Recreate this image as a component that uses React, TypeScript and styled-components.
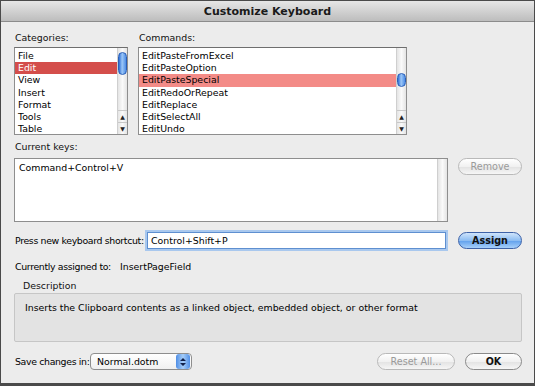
import styled, { createGlobalStyle } from "styled-components"

const Global = createGlobalStyle`
  html, body { margin: 0; padding: 0; background: #3c3c3c; }
  body { font-family: "DejaVu Sans", "Liberation Sans", sans-serif; font-size: 9.4px; color: #000; }
  * { box-sizing: border-box; }
`

const categories = ["File", "Edit", "View", "Insert", "Format", "Tools", "Table"]
const commands = [
  "EditPasteFromExcel",
  "EditPasteOption",
  "EditPasteSpecial",
  "EditRedoOrRepeat",
  "EditReplace",
  "EditSelectAll",
  "EditUndo",
]

const Window = styled.div`
  width: 535px;
  height: 386px;
  background: #ececec;
  border: 1px solid #4a4a4a;
  border-bottom: 3px solid #4a4a4a;
  display: flex;
  flex-direction: column;
  overflow: hidden;
`
const TitleBar = styled.div`
  height: 21px;
  flex: none;
  background: linear-gradient(#e6e6e6, #bdbdbd);
  border-bottom: 1px solid #8c8c8c;
  display: flex;
  align-items: center;
  justify-content: center;
  font-weight: bold;
  font-size: 11px;
  color: #1a1a1a;
`
const Body = styled.div`
  flex: 1;
  padding: 9px 12px 0 13px;
  display: flex;
  flex-direction: column;
  white-space: nowrap;
`
const Label = styled.div<{ $indent?: number; $gap?: number }>`
  height: 13px;
  line-height: 13px;
  padding-left: ${(p) => p.$indent ?? 1}px;
  margin-top: ${(p) => p.$gap ?? 0}px;
  color: #111;
`
const ListRow = styled.div`
  display: flex;
  gap: 10px;
`
const Column = styled.div<{ $w: number }>`
  width: ${(p) => p.$w}px;
  display: flex;
  flex-direction: column;
  gap: 3px;
`
const ListBox = styled.div`
  height: 88px;
  background: #fff;
  border: 1px solid #8e8e8e;
  border-top-color: #6e6e6e;
  display: flex;
`
const Items = styled.div`
  flex: 1;
  padding-top: 2px;
`
const Item = styled.div<{ $sel?: string; $light?: boolean }>`
  height: 12.2px;
  line-height: 12px;
  padding-left: 3px;
  background: ${(p) => p.$sel ?? "transparent"};
  color: ${(p) => (p.$sel && !p.$light ? "#fff" : "#000")};
`
const Track = styled.div`
  width: 10px;
  position: relative;
  background: linear-gradient(90deg, #e4e4e4, #fafafa 50%, #e4e4e4);
  border-left: 1px solid #cfcfcf;
  display: flex;
  flex-direction: column;
  justify-content: flex-end;
`
const Thumb = styled.div<{ $top: number; $h: number }>`
  position: absolute;
  left: 0;
  width: 9px;
  top: ${(p) => p.$top}px;
  height: ${(p) => p.$h}px;
  border-radius: 5px;
  background: linear-gradient(90deg, #2d6fd6, #9cc7f7 45%, #4d8de6);
  border: 1px solid #2a5fb8;
`
const Arrow = styled.div`
  height: 12px;
  border-top: 1px solid #c8c8c8;
  font-size: 6px;
  line-height: 11px;
  text-align: center;
  color: #222;
`
const KeysRow = styled.div`
  display: flex;
  gap: 10px;
  margin-top: 5px;
`
const KeysBox = styled.div`
  width: 435px;
  height: 64px;
  background: #fff;
  border: 1px solid #8e8e8e;
  display: flex;
`
const KeysText = styled.div`
  flex: 1;
  padding: 3px 4px;
`
const Button = styled.button<{ $w: number; $primary?: boolean; $disabled?: boolean }>`
  width: ${(p) => p.$w}px;
  height: 17px;
  flex: none;
  border-radius: 9px;
  font-family: inherit;
  font-size: 9.6px;
  padding: 0;
  font-weight: ${(p) => (p.$disabled ? "normal" : "bold")};
  color: ${(p) => (p.$disabled ? "#9a9a9a" : "#111")};
  border: 1px solid ${(p) => (p.$primary ? "#3d62a8" : p.$disabled ? "#b9b9b9" : "#8a8a8a")};
  background: ${(p) =>
    p.$primary
      ? "linear-gradient(#cfe4fb, #8dbdf2 50%, #5f9fec 51%, #a7d0fa)"
      : "linear-gradient(#ffffff, #f1f1f1 50%, #e2e2e2 51%, #f6f6f6)"};
`
const ShortcutRow = styled.div`
  display: flex;
  align-items: center;
  margin-top: 10px;
`
const InlineLabel = styled.span<{ $w: number }>`
  width: ${(p) => p.$w}px;
  padding-left: 1px;
  letter-spacing: -0.35px;
  flex: none;
`
const Input = styled.div`
  flex: 1;
  height: 17px;
  background: #fff;
  border: 1px solid #5e8fd0;
  box-shadow: 0 0 0 2px #a9c8ee;
  line-height: 15px;
  padding-left: 3px;
  margin-right: 12px;
`
const AssignedRow = styled.div`
  display: flex;
  height: 13px;
  line-height: 13px;
  margin-top: 11px;
`
const DescBox = styled.div`
  margin-top: 1px;
  height: 49px;
  background: #e3e3e3;
  border: 1px solid #c6c6c6;
  border-radius: 2px;
  padding: 8px 10px;
`
const Footer = styled.div`
  display: flex;
  align-items: center;
  margin-top: 11px;
`
const Select = styled.div`
  width: 102px;
  height: 17px;
  border: 1px solid #8e8e8e;
  border-radius: 4px;
  background: linear-gradient(#ffffff, #f0f0f0);
  display: flex;
  align-items: center;
  overflow: hidden;
`
const SelectText = styled.span`
  flex: 1;
  padding-left: 6px;
`
const Stepper = styled.div`
  width: 14px;
  height: 15px;
  margin-right: 1px;
  border-radius: 3px;
  background: linear-gradient(90deg, #4f8ee6, #a6cdf7 50%, #4f8ee6);
  display: flex;
  align-items: center;
  justify-content: center;
`
const Spacer = styled.div`
  flex: 1;
`

export default function App() {
  return (
    <Window>
      <Global />
      <TitleBar>Customize Keyboard</TitleBar>
      <Body>
        <ListRow>
          <Column $w={114}>
            <Label>Categories:</Label>
            <ListBox>
              <Items>
                {categories.map((c) => (
                  <Item key={c} $sel={c === "Edit" ? "#d44e4b" : undefined}>
                    {c}
                  </Item>
                ))}
              </Items>
              <Track>
                <Thumb $top={4} $h={23} />
                <Arrow>▲</Arrow>
                <Arrow>▼</Arrow>
              </Track>
            </ListBox>
          </Column>
          <Column $w={269}>
            <Label>Commands:</Label>
            <ListBox>
              <Items>
                {commands.map((c) => (
                  <Item key={c} $light $sel={c === "EditPasteSpecial" ? "#f38b87" : undefined}>
                    {c}
                  </Item>
                ))}
              </Items>
              <Track>
                <Thumb $top={25} $h={14} />
                <Arrow>▲</Arrow>
                <Arrow>▼</Arrow>
              </Track>
            </ListBox>
          </Column>
        </ListRow>
        <Label $gap={5}>Current keys:</Label>
        <KeysRow>
          <KeysBox>
            <KeysText>Command+Control+V</KeysText>
            <Track />
          </KeysBox>
          <Button $w={64} $disabled>
            Remove
          </Button>
        </KeysRow>
        <ShortcutRow>
          <InlineLabel $w={133}>Press new keyboard shortcut:</InlineLabel>
          <Input>Control+Shift+P</Input>
          <Button $w={64} $primary>
            Assign
          </Button>
        </ShortcutRow>
        <AssignedRow>
          <InlineLabel $w={106}>Currently assigned to:</InlineLabel>
          <span>InsertPageField</span>
        </AssignedRow>
        <Label $indent={9} $gap={6}>
          Description
        </Label>
        <DescBox>Inserts the Clipboard contents as a linked object, embedded object, or other format</DescBox>
        <Footer>
          <InlineLabel $w={76}>Save changes in:</InlineLabel>
          <Select>
            <SelectText>Normal.dotm</SelectText>
            <Stepper>
              <svg width="6" height="10" viewBox="0 0 6 10">
                <path d="M0 4 L3 1 L6 4 Z M0 6 L3 9 L6 6 Z" fill="#10204a" />
              </svg>
            </Stepper>
          </Select>
          <Spacer />
          <Button $w={78} $disabled>
            Reset All...
          </Button>
          <Button $w={57} style={{ marginLeft: 10 }}>
            OK
          </Button>
        </Footer>
      </Body>
    </Window>
  )
}
